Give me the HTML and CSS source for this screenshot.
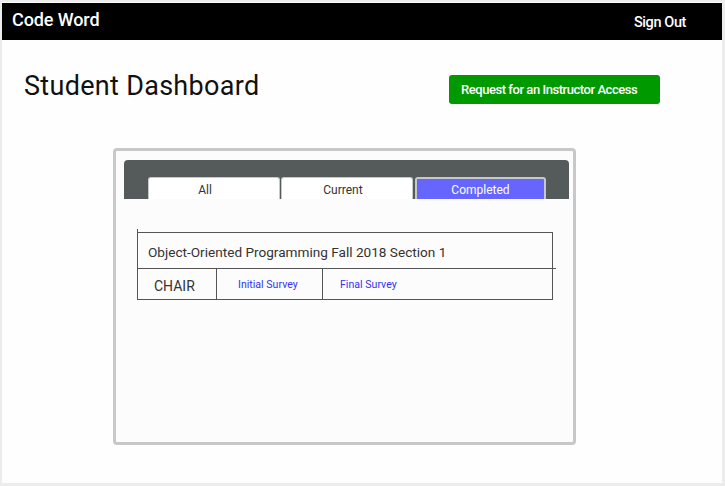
FILE: index.html
```html
<!DOCTYPE html>
<html>
<head>
<meta charset="utf-8">
<link rel="stylesheet" href="styles.css">
</head>
<body>
<div class="page">
  <header class="topbar">
    <span class="brand">Code Word</span>
    <span class="signout">Sign Out</span>
  </header>
  <div class="headline">
    <h1 class="title">Student Dashboard</h1>
    <button class="request">Request for an Instructor Access</button>
  </div>
  <div class="card">
    <div class="tabbar">
      <div class="tab first">All</div>
      <div class="tab second">Current</div>
      <div class="tab active">Completed</div>
    </div>
    <div class="course">
      <div class="course-name">Object-Oriented Programming Fall 2018 Section 1</div>
      <div class="divider"></div>
      <div class="course-row">
        <div class="cell role">CHAIR</div>
        <div class="cell link-cell initial"><a class="link">Initial Survey</a></div>
        <div class="cell link-cell final"><a class="link">Final Survey</a></div>
      </div>
    </div>
  </div>
</div>
</body>
</html>
```
FILE: styles.css
```css
* { box-sizing: border-box; }
html, body { margin: 0; padding: 0; }
body {
  background: #ececec;
  width: 725px;
  height: 486px;
  overflow: hidden;
  font-family: Roboto, "Noto Sans", sans-serif;
}
.page {
  margin: 2px 0 0 2px;
  width: 720px;
  height: 481px;
  background: #fefefe;
  display: flex;
  flex-direction: column;
}
.topbar {
  margin-top: 1px;
  height: 37px;
  background: #000;
  color: #fff;
  display: flex;
  align-items: center;
  justify-content: space-between;
  padding: 0 36px 0 10px;
}
.brand {
  font-size: 18px;
  font-weight: 500;
  letter-spacing: -0.1px;
  margin-top: -4px;
}
.signout {
  font-size: 14.5px;
  font-weight: 500;
  letter-spacing: -0.4px;
  margin-top: 1px;
}
.headline {
  display: flex;
  align-items: flex-start;
  padding: 31px 0 0 22px;
}
.title {
  margin: 0;
  font-size: 27px;
  font-weight: 400;
  color: #111;
  line-height: 30px;
  letter-spacing: 0.3px;
  width: 425px;
}
.request {
  margin-top: 4px;
  width: 211px;
  height: 29px;
  background: #009900;
  border: none;
  border-radius: 3px;
  color: #fff;
  font-family: Roboto, sans-serif;
  font-size: 13px;
  font-weight: 500;
  letter-spacing: -0.45px;
  text-align: left;
  padding: 0 0 0 12px;
}
.card {
  margin: 44px 0 0 111px;
  width: 463px;
  height: 297px;
  border: 3px solid #c8c8c8;
  border-radius: 4px;
  background: #fcfcfc;
  padding: 9px 4px 0 8px;
}
.tabbar {
  height: 39px;
  background: #555a5a;
  border-radius: 4px 4px 0 0;
  display: flex;
  align-items: flex-end;
  gap: 1px;
  padding-left: 24px;
}
.tab {
  width: 132px;
  height: 22px;
  background: #fff;
  border: 1px solid #c5c9c9;
  border-bottom: none;
  border-radius: 3px 3px 0 0;
  font-size: 12px;
  color: #333;
  text-align: center;
  line-height: 24px;
}
.tab.first { padding-right: 18px; }
.tab.second { padding-right: 8px; }
.tab.active {
  margin-left: 1px;
  width: 131px;
  background: #6666ff;
  color: #fff;
  border: 2px solid #c5c9c9;
  border-bottom: none;
  line-height: 22px;
}
.course {
  margin: 30px 0 0 13px;
  width: 416px;
  border-left: 1px solid #555;
  padding-top: 3px;
}
.course-name {
  height: 36px;
  border-top: 1px solid #555;
  border-right: 1px solid #555;
  font-size: 13.6px;
  color: #333;
  padding-left: 10px;
  line-height: 38px;
}
.divider {
  width: 418px;
  height: 1px;
  background: #555;
}
.course-row {
  display: flex;
  height: 31px;
  border-bottom: 1px solid #555;
  border-right: 1px solid #555;
}
.cell {
  height: 30px;
}
.role {
  width: 79px;
  border-right: 1px solid #555;
  font-size: 14px;
  color: #333;
  padding-left: 16px;
  line-height: 35px;
}
.initial {
  width: 106px;
  border-right: 1px solid #555;
  padding-left: 21px;
}
.final {
  flex: 1;
  padding-left: 17px;
}
.link-cell { line-height: 28px; }
.link {
  font-size: 10.6px;
  color: #3333ee;
}
```
